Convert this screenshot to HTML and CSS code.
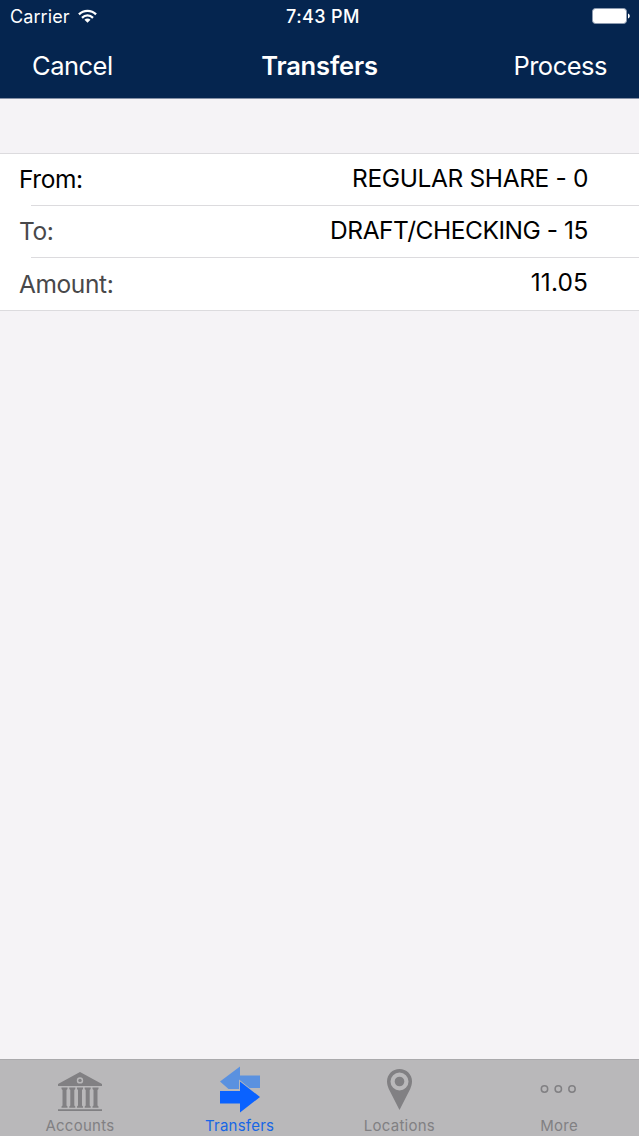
FILE: index.html
```html
<!DOCTYPE html>
<html lang="en">
<head>
    <meta charset="UTF-8">
    <meta name="viewport" content="width=device-width, initial-scale=1.0">
    <title>Transfers</title>
    <link rel="stylesheet" href="styles.css">
</head>
<body>

    <header class="header">
        <div class="status-bar">
            <div class="carrier">
                <span>Carrier</span>
                <svg class="wifi" width="19" height="15" viewBox="0 0 20 15" fill="none" stroke="#fff" stroke-width="2.4">
                    <path d="M1 5.3C6 .2 14 .2 19 5.3"/>
                    <path d="M4.2 8.9C7.6 5.6 12.4 5.6 15.8 8.9"/>
                    <path d="M10 14.2L6.8 11C8.6 9.3 11.4 9.3 13.2 11Z" fill="#fff" stroke="none"/>
                </svg>
            </div>
            <span class="time">7:43 PM</span>
            <svg class="battery" width="38" height="16" viewBox="0 0 38 16">
                <rect x=".5" y=".5" width="34" height="15" rx="3" fill="#fff" stroke="#8d9bb0"/>
                <path d="M36 5.5C38.4 6.2 38.4 9.8 36 10.5Z" fill="#fff"/>
            </svg>
        </div>
        <nav class="nav-bar">
            <a class="cancel">Cancel</a>
            <h1>Transfers</h1>
            <a class="process">Process</a>
        </nav>
    </header>

    <main class="content">
        <div class="transfer-form">
            <div class="row">
                <span class="label from">From:</span>
                <span class="value">REGULAR SHARE - 0</span>
            </div>
            <div class="row">
                <span class="label">To:</span>
                <span class="value draft">DRAFT/CHECKING - 15</span>
            </div>
            <div class="row last">
                <span class="label">Amount:</span>
                <span class="value number">11.05</span>
            </div>
        </div>
    </main>

    <footer class="tab-bar">
        <a class="tab">
            <svg width="50" height="50" viewBox="0 0 50 50" fill="currentColor">
                <path fill-rule="evenodd" d="M25 7L47 19V21H3V19ZM25 12.2a3.2 3.2 0 1 0 0 6.400a3.200 3.200 0 1 0 0-6.400Z"/>
                <circle cx="25" cy="15.400" r="1.700"/>
                <path d="M6.500 22.500h6v1.500l-1 1V40.500l1 1v1.200H6.500V41.500l1-1V25l-1-1ZM14.300 22.500h6v1.500l-1 1V40.500l1 1v1.200h-6V41.500l1-1V25l-1-1ZM22 22.500h6v1.500l-1 1V40.500l1 1v1.200h-6V41.500l1-1V25l-1-1ZM29.700 22.500h6v1.500l-1 1V40.500l1 1v1.200h-6V41.500l1-1V25l-1-1ZM37.500 22.500h6v1.500l-1 1V40.500l1 1v1.200h-6V41.500l1-1V25l-1-1Z"/>
                <path d="M3 44.200H47V46H3Z"/>
            </svg>
            <span>Accounts</span>
        </a>
        <a class="tab active">
            <svg width="50" height="50" viewBox="0 0 50 50">
                <path fill="#5a91e0" d="M5 16.500L25 1.500V10.500H45V23H34.500L24 14.500V24H13.500Z"/>
                <path fill="#0a62ff" d="M5 26H25V16.500L45 32L25 47.500V38.500H5Z"/>
            </svg>
            <span>Transfers</span>
        </a>
        <a class="tab">
            <svg width="50" height="50" viewBox="0 0 50 50">
                <path fill="currentColor" fill-rule="evenodd" d="M25.500 4C32.500 4 38 9.500 38 16.300C38 19 37.300 21.500 36.200 24L25.500 45L14.800 24C13.700 21.500 13 19 13 16.300C13 9.500 18.500 4 25.500 4ZM25.500 7.500a9 9 0 1 0 0 18a9 9 0 1 0 0-18Z"/>
                <circle cx="25.500" cy="16.500" r="4.800" fill="currentColor"/>
            </svg>
            <span>Locations</span>
        </a>
        <a class="tab">
            <svg width="50" height="50" viewBox="0 0 50 50" fill="none" stroke="currentColor" stroke-width="1.500">
                <circle cx="10.500" cy="24" r="3.200"/>
                <circle cx="24.300" cy="24" r="3.200"/>
                <circle cx="38" cy="24" r="3.200"/>
            </svg>
            <span>More</span>
        </a>
    </footer>

</body>
</html>
```
FILE: styles.css
```css
body {
    font-family: Inter, sans-serif;
    background-color: #f5f3f6;
    color: #000;
    margin: 0;
    height: 100vh;
    display: flex;
    flex-direction: column;
    overflow: hidden;
}

.header {
    background-color: #05254f;
    color: #fff;
    height: 99px;
    border-bottom: 1px solid #8590a6;
    box-sizing: border-box;
}

.status-bar {
    display: grid;
    grid-template-columns: 1fr auto 1fr;
    align-items: center;
    height: 32px;
    padding: 0 9px 0 10px;
    font-size: 18px;
}

.carrier {
    display: flex;
    align-items: center;
    gap: 8px;
    letter-spacing: 0.1px;
}

.time {
    font-weight: 500;
    letter-spacing: 0.4px;
    margin-left: 6px;
}

.battery {
    justify-self: end;
}

.nav-bar {
    display: grid;
    grid-template-columns: 1fr auto 1fr;
    align-items: center;
    height: 66px;
    padding: 0 32px;
    font-size: 25.5px;
    letter-spacing: -0.5px;
}

.nav-bar h1 {
    font-size: 25.5px;
    font-weight: 600;
    letter-spacing: -0.15px;
    margin: 0;
}

.process {
    text-align: right;
}

.content {
    flex: 1;
    padding-top: 54px;
}

.transfer-form {
    background-color: #fff;
    border-top: 1px solid #dcdbde;
    border-bottom: 1px solid #dcdbde;
}

.row {
    display: flex;
    justify-content: space-between;
    align-items: center;
    height: 51px;
    padding: 0 51px 0 19px;
    font-size: 24.5px;
}

.row + .row {
    border-top: 1px solid #dcdbde;
    border-image: linear-gradient(to right, #fff 32px, #dcdbde 32px) 1;
}

.last {
    height: 52px;
}

.label {
    color: #48484a;
    letter-spacing: -0.4px;
    padding-bottom: 2px;
}

.last .label {
    padding-bottom: 0;
}

.from {
    color: #000;
}

.value {
    letter-spacing: -0.37px;
    padding-bottom: 4px;
}

.draft {
    letter-spacing: -0.46px;
}

.number {
    letter-spacing: 0.1px;
}

.tab-bar {
    display: grid;
    grid-template-columns: repeat(4, 1fr);
    height: 77px;
    background-color: #b9b8ba;
    border-top: 1px solid #aaa9ac;
    box-sizing: border-box;
}

.tab {
    display: flex;
    flex-direction: column;
    align-items: center;
    padding-top: 5px;
    color: #818083;
    font-size: 15px;
    line-height: 22px;
    letter-spacing: 0.25px;
}

.active {
    color: #1766e5;
}
```
